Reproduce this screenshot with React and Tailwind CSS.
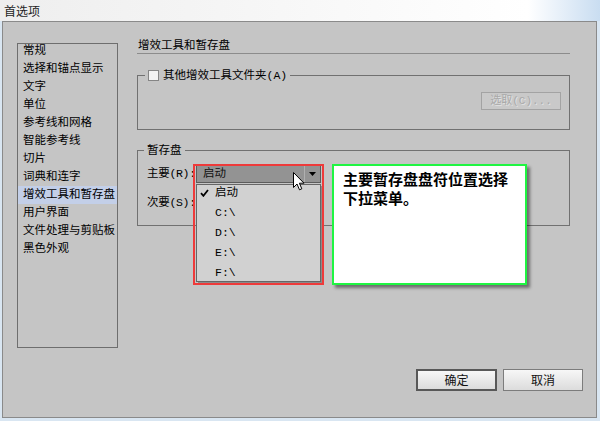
export default function App() {
  const items = [
    "常规",
    "选择和锚点显示",
    "文字",
    "单位",
    "参考线和网格",
    "智能参考线",
    "切片",
    "词典和连字",
    "增效工具和暂存盘",
    "用户界面",
    "文件处理与剪贴板",
    "黑色外观",
  ];
  const drives = ["C:\\", "D:\\", "E:\\", "F:\\"];
  return (
    <div className="relative w-[600px] h-[421px] overflow-hidden bg-[#d9e6f2] text-[11.5px] text-black [font-family:'Liberation_Mono','Noto_Sans_CJK_SC',monospace] flex flex-col">
      <div className="h-[21px] shrink-0 flex items-center pl-[4px] bg-linear-to-r from-[#eeeeee] via-white via-[88%] to-[#c9ddf1] text-[12px] text-[#1e1e1e] [font-family:'Noto_Sans_CJK_SC',sans-serif]">
        首选项
      </div>
      <div className="ml-[2px] w-[595px] h-[397px] shrink-0 border border-[#8a8a8a] bg-[#c5c5c5] flex flex-col pt-[17px]">
        <div className="flex items-start pl-[14px]">
          <div className="mt-[4px] w-[101px] h-[305px] border border-[#6e6e6e] overflow-hidden">
            <div className="-mt-[2px] flex flex-col">
              {items.map((t, i) => (
                <div
                  key={t}
                  className={
                    i === 8
                      ? "h-[18px] leading-[18px] pl-[5px] whitespace-nowrap bg-[#c3cfe8]"
                      : "h-[18px] leading-[18px] pl-[5px] whitespace-nowrap"
                  }
                >
                  {t}
                </div>
              ))}
            </div>
          </div>
          <div className="ml-[19px] w-[433px] flex flex-col">
            <div className="h-[15px] leading-[14px] border-b border-[#8c8c8c] pl-[1px]">
              增效工具和暂存盘
            </div>
            <div className="relative mt-[21px] h-[55px] border border-[#717171] flex justify-end items-start pt-[16px] pr-[8px]">
              <div className="absolute -top-[8px] left-[7px] px-[3px] bg-[#c5c5c5] flex items-center h-[15px] leading-[15px] whitespace-nowrap">
                <span className="w-[11px] h-[11px] border border-[#858585] bg-[#f2f2f2] mr-[4px]" />
                <span>其他增效工具文件夹(A)</span>
              </div>
              <div className="w-[80px] h-[18px] border border-[#a3a3a3] bg-[#c9c9c9] flex items-center justify-center text-[11px] text-[#a9a9a9] whitespace-nowrap [text-shadow:1px_1px_0_#e2e2e2]">
                选取(C)...
              </div>
            </div>
            <div className="relative mt-[20px] h-[76px] border border-[#717171] flex flex-col pt-[14px] pl-[9px] gap-[11px]">
              <div className="absolute -top-[8px] left-[6px] px-[3px] bg-[#c5c5c5] h-[15px] leading-[15px]">
                暂存盘
              </div>
              <div className="flex items-center h-[18px]">
                <span className="w-[49px] shrink-0 whitespace-nowrap tracking-[-0.3px]">主要(R):</span>
                <div className="w-[125px] h-[18px] shrink-0 border border-[#5c5c5c] bg-[#939393] flex items-center">
                  <span className="flex-1 pl-[6px] text-[#111] leading-[16px]">启动</span>
                  <div className="w-[16px] h-full border-l border-[#b0b0b0] flex items-center justify-center">
                    <svg width="7" height="4" viewBox="0 0 7 4">
                      <path d="M0 0H7L3.5 4Z" fill="#000" />
                    </svg>
                  </div>
                </div>
              </div>
              <div className="flex items-center h-[18px]">
                <span className="w-[49px] shrink-0 whitespace-nowrap tracking-[-0.3px]">次要(S):</span>
                <div className="w-[125px] h-[18px] shrink-0 border border-[#5c5c5c] bg-[#d0d0d0]" />
              </div>
            </div>
          </div>
        </div>
        <div className="mt-[21px] flex justify-end gap-[6px] pr-[13px]">
          <div className="w-[81px] h-[22px] border-2 border-[#585858] bg-linear-to-b from-[#f7f7f7] to-[#dcdcdc] flex items-center justify-center text-[12px] text-[#111] [font-family:'Noto_Sans_CJK_SC',sans-serif]">
            确定
          </div>
          <div className="w-[80px] h-[22px] border border-[#7c7c7c] bg-linear-to-b from-[#f7f7f7] to-[#dcdcdc] flex items-center justify-center text-[12px] text-[#111] [font-family:'Noto_Sans_CJK_SC',sans-serif]">
            取消
          </div>
        </div>
      </div>

      {/* dropdown list */}
      <div className="absolute left-[196px] top-[184px] w-[125px] h-[98px] border border-[#666] bg-[#d1d1d1] shadow-[2px_2px_0_#8b8b8b] overflow-hidden">
        <div className="-mt-[2px] flex flex-col">
          <div className="h-[20px] flex items-center">
            <span className="w-[18px] pl-[3px] flex items-center">
              <svg width="9" height="8" viewBox="0 0 9 8">
                <path d="M1 4.2L3.4 6.8L8 1" fill="none" stroke="#000" strokeWidth="1.8" />
              </svg>
            </span>
            <span>启动</span>
          </div>
          {drives.map((d) => (
            <div key={d} className="h-[20px] flex items-center pl-[18px]">
              {d}
            </div>
          ))}
        </div>
      </div>

      {/* cursor */}
      <svg className="absolute left-[293px] top-[172px]" width="12" height="19" viewBox="0 0 12 19">
        <path d="M0.5 0.5V15.5L4 12L6.5 17.8L8.8 16.8L6.4 11.2H11Z" fill="#fff" stroke="#000" strokeWidth="1" strokeLinejoin="round" />
      </svg>

      {/* red highlight */}
      <div className="absolute left-[193px] top-[164px] w-[131px] h-[121px] border-2 border-[#ee3a3a]" />

      {/* green callout */}
      <div className="absolute left-[332px] top-[164px] w-[195px] h-[121px] border-2 border-[#1ff542] bg-white shadow-[3px_3px_3px_rgba(0,0,0,0.45)] pt-[3px] pl-[9px] text-[15px] leading-[19px] font-bold [font-family:'Noto_Sans_CJK_SC',sans-serif]">
        <div>主要暂存盘盘符位置选择</div>
        <div>下拉菜单。</div>
      </div>
    </div>
  );
}
